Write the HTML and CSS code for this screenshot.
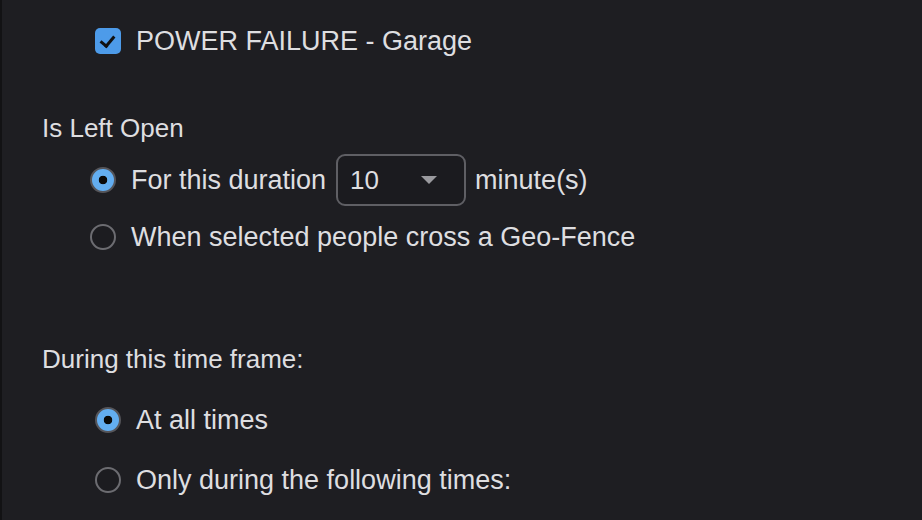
FILE: index.html
```html
<!DOCTYPE html>
<html lang="en">
<head>
    <meta charset="UTF-8">
    <meta name="viewport" content="width=device-width, initial-scale=1.0">
    <title>Alert settings</title>
    <link rel="stylesheet" href="styles.css">
</head>
<body>

    <div class="panel">

        <label class="row trigger">
            <input type="checkbox" class="check" checked>
            <span>POWER FAILURE - Garage</span>
        </label>

        <h3 class="heading left-open">Is Left Open</h3>

        <div class="group group-open">
            <label class="row duration-row">
                <input type="radio" name="open" class="radio" checked>
                <span>For this duration</span>
                <span class="select">
                    <span class="select-value">10</span>
                    <span class="select-arrow"></span>
                </span>
                <span>minute(s)</span>
            </label>
            <label class="row geo-row">
                <input type="radio" name="open" class="radio">
                <span>When selected people cross a Geo-Fence</span>
            </label>
        </div>

        <h3 class="heading time-frame">During this time frame:</h3>

        <div class="group group-time">
            <label class="row">
                <input type="radio" name="time" class="radio" checked>
                <span>At all times</span>
            </label>
            <label class="row">
                <input type="radio" name="time" class="radio">
                <span>Only during the following times:</span>
            </label>
        </div>

    </div>

</body>
</html>
```

FILE: styles.css
```css
* {
    margin: 0;
    padding: 0;
    box-sizing: border-box;
}

body {
    background-color: #1e1e22;
    border-left: 2px solid #121214;
    min-height: 520px;
    font-family: 'Liberation Sans', Arial, sans-serif;
    font-size: 27px;
    color: #dedee0;
}

.panel {
    padding-top: 26px;
}

/* rows with a control and a label */
.row {
    display: flex;
    align-items: center;
    gap: 15px;
    height: 30px;
}

.trigger {
    padding-left: 93px;
}

.heading {
    font-size: 26px;
    font-weight: normal;
    line-height: 30px;
    padding-left: 40px;
}

.left-open {
    margin-top: 57px;
}

.time-frame {
    margin-top: 92px;
}

.group {
    display: flex;
    flex-direction: column;
}

.group-open {
    padding-left: 88px;
    margin-top: 11px;
    gap: 16px;
}

.group-open .duration-row {
    height: 52px;
    gap: 0;
}

.duration-row .radio {
    margin-right: 15px;
}

.group-time {
    padding-left: 93px;
    margin-top: 31px;
    gap: 30px;
}

/* checkbox */
.check {
    appearance: none;
    width: 26px;
    height: 26px;
    border-radius: 5px;
    background-color: #4d9be9;
    flex-shrink: 0;
    position: relative;
}

.check::after {
    content: '';
    position: absolute;
    left: 8px;
    top: 5px;
    width: 6px;
    height: 11px;
    border-right: 3px solid #111;
    border-bottom: 3px solid #111;
    transform: rotate(40deg);
}

/* radio buttons */
.radio {
    appearance: none;
    width: 26px;
    height: 26px;
    border-radius: 50%;
    border: 2px solid #6c6c71;
    background-color: #1c1c20;
    flex-shrink: 0;
}

.radio:checked {
    border-color: #55555a;
    background: radial-gradient(circle, #0a0a0a 0 4px, #63aef1 4.6px);
}

/* duration select */
.select {
    display: flex;
    align-items: center;
    justify-content: space-between;
    width: 130px;
    height: 52px;
    margin: 0 9px 0 10px;
    padding: 0 27px 0 12px;
    border: 2px solid #5f5f64;
    border-radius: 9px;
    background-color: #1b1b1f;
}

.select-value {
    font-size: 26px;
}

.select-arrow {
    width: 0;
    height: 0;
    border-left: 8px solid transparent;
    border-right: 8px solid transparent;
    border-top: 8px solid #9a9a9e;
}
```
